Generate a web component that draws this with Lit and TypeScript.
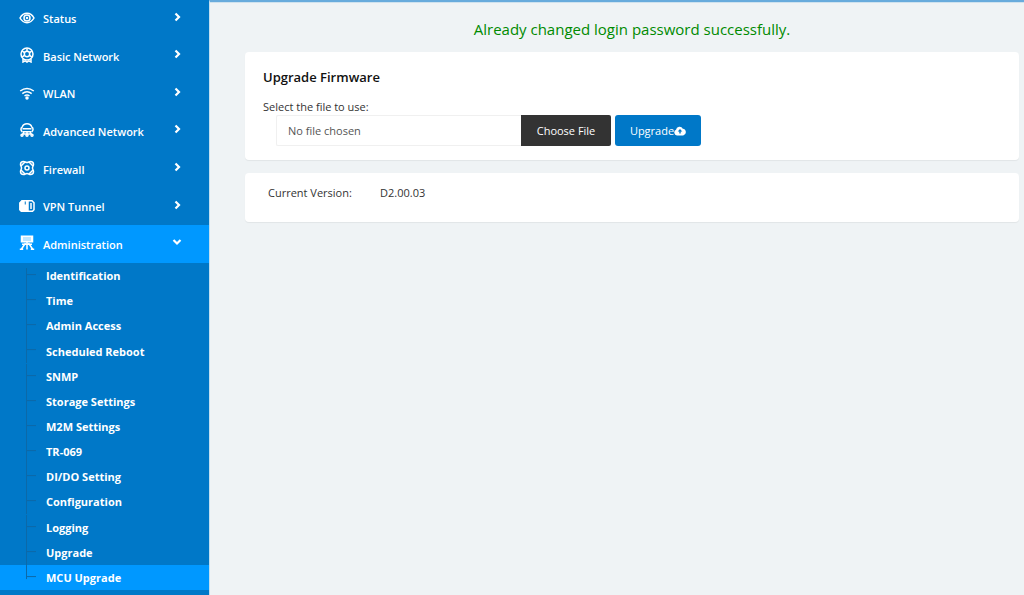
import { LitElement, html, css, svg } from "lit";
import { customElement, state } from "lit/decorators.js";
import { classMap } from "lit/directives/class-map.js";

const icons = {
  status: svg`<path d="M1 8C4.500 1.800 11.500 1.800 15 8C11.500 14.200 4.500 14.200 1 8Z"/><circle cx="8" cy="8" r="3"/><circle cx="8" cy="8" r=".5"/>`,
  basic: svg`<circle cx="8" cy="7" r="6"/><circle cx="8" cy="7" r="2.700"/><path d="M8 1.500v2.500M3.200 4.200l2.200 1.300M12.800 4.200l-2.200 1.300M3.200 9.800l2.200-1.300M12.800 9.800l-2.200-1.300M4 12v3l2.200-1.200L8 15l1.800-1.200L12 15v-3"/>`,
  wlan: svg`<path d="M1.200 6Q8 .8 14.800 6M3.300 8.600Q8 5 12.700 8.600M5.500 11Q8 9 10.500 11"/><circle class="solid" cx="8" cy="13" r="1"/>`,
  advanced: svg`<path d="M3.300 9.800A3 3 0 0 1 3.300 4.800C4.500 .7 11.500 .7 12.700 4.800A3 3 0 0 1 12.700 9.800"/><path d="M3.500 6.800h9M3.500 9.800h9M4.500 9.800v3M8 9.800v3M11.500 9.800v3M3 12h10"/><circle cx="3" cy="13.200" r="1"/><circle cx="8" cy="13.200" r="1"/><circle cx="13" cy="13.200" r="1"/>`,
  firewall: svg`<path d="M4.500 1.500C2.500 1.500 1.500 2.500 1.500 4.500C1.500 6 2.500 6.500 2.500 8C2.500 9.500 1.500 10 1.500 11.500C1.500 13.500 2.500 14.500 4.500 14.500C6 14.500 6.500 13.500 8 13.500C9.500 13.500 10 14.500 11.500 14.500C13.500 14.500 14.500 13.500 14.500 11.500C14.500 10 13.500 9.500 13.500 8C13.500 6.500 14.500 6 14.500 4.500C14.500 2.500 13.500 1.500 11.500 1.500C10 1.500 9.500 2.500 8 2.500C6.500 2.500 6 1.500 4.500 1.500Z"/><circle cx="8" cy="8" r="2"/><path d="M2 6L6 2M10 2l4 4M2 10l4 4M14 10l-4 4"/>`,
  vpn: svg`<path d="M3.500 2.800h9.500l2 2v6.900l-1.500 1.500H2.500L1 11.700V5Z"/><path class="solid" d="M1 5l2-2.200h2v4.400h2.500V2.800H9v10.400H2.500L1 11.700Z"/><path d="M12 5v6"/>`,
  admin: svg`<path class="solid" d="M2.500 1.200h11v5.600h-11z"/><path class="cut" d="M4 3h8M4 5h8"/><path d="M8 7v7.500M3 9.200h10M6.500 8l-4 6M9.500 8l4 6M.8 14.200h3.400M11.800 14.200h3.400"/>`,
};

const sections = [
  { label: "Status", icon: icons.status },
  { label: "Basic Network", icon: icons.basic },
  { label: "WLAN", icon: icons.wlan },
  { label: "Advanced Network", icon: icons.advanced },
  { label: "Firewall", icon: icons.firewall },
  { label: "VPN Tunnel", icon: icons.vpn },
  { label: "Administration", icon: icons.admin },
];

const adminPages = [
  "Identification", "Time", "Admin Access", "Scheduled Reboot", "SNMP",
  "Storage Settings", "M2M Settings", "TR-069", "DI/DO Setting",
  "Configuration", "Logging", "Upgrade", "MCU Upgrade",
];

@customElement("side-menu")
class SideMenu extends LitElement {
  static styles = css`
    :host { display: block; background: #0078c8; color: #fff; }
    a { color: inherit; text-decoration: none; }
    ul { list-style: none; margin: 0; padding: 0; display: grid; grid-auto-rows: 1fr; }
    .sections { height: 263px; }
    .pages { height: 327px; }
    .section {
      display: flex; align-items: center; height: 100%; box-sizing: border-box;
      padding: 0 27px 0 19px; font-size: 11px; font-weight: 600;
    }
    .open, .current { background: #0098ff; }
    .icon {
      width: 16px; height: 16px; margin: 0 8px 2px 0;
      fill: none; stroke: #fff; stroke-width: 1.5;
    }
    .solid { fill: #fff; }
    .cut { stroke: #0098ff; stroke-width: 0.5; }
    .label { flex: 1; }
    .arrow {
      width: 10px; height: 10px; margin-bottom: 4px;
      fill: none; stroke: #fff; stroke-width: 2.2;
    }
    .page {
      display: flex; align-items: center; height: 100%; padding-left: 26px;
      font-size: 11px; font-weight: 700;
    }
    .branch {
      width: 10px; height: 100%; margin-right: 10px;
      fill: none; stroke: #0c69a8; stroke-width: 1;
    }
  `;

  render() {
    return html`
      <nav aria-label="Main">
        <ul class="sections">
          ${sections.map((s) => {
            const open = s.label === "Administration";
            return html`<li>
              <a href="#" class=${classMap({ section: true, open })}>
                <svg class="icon" viewBox="0 0 16 16" aria-hidden="true">${s.icon}</svg>
                <span class="label">${s.label}</span>
                <svg class="arrow" viewBox="0 0 10 10" aria-hidden="true">
                  <path d=${open ? "M1.500 3L5 6.500L8.500 3" : "M3.500 1.500L7 5L3.500 8.500"} />
                </svg>
              </a>
            </li>`;
          })}
        </ul>
        <ul class="pages">
          ${adminPages.map((p, i) => {
            const last = i === adminPages.length - 1;
            const first = i === 0;
            return html`<li>
              <a href="#" class=${classMap({ page: true, current: last })}>
                <svg class="branch" viewBox="0 0 10 25" aria-hidden="true">
                  <path d="M.5 ${first ? 5 : 0}V${last ? 14 : 25}M1 11.500H10" />
                </svg>
                <span>${p}</span>
              </a>
            </li>`;
          })}
        </ul>
      </nav>
    `;
  }
}

@customElement("firmware-form")
class FirmwareForm extends LitElement {
  @state() fileName = "No file chosen";

  static styles = css`
    :host { display: block; }
    h2 { margin: 0; font-size: 13px; line-height: 20px; font-weight: 600; color: #111; }
    .hint { display: block; margin-top: 12px; line-height: 16px; color: #333; }
    .row { display: flex; gap: 4px; margin-left: 13px; }
    .picker { position: relative; display: flex; width: 335px; height: 31px; }
    .name {
      flex: 1; box-sizing: border-box; padding-left: 11px; line-height: 30px;
      border: 1px solid #f0f0f0; border-right: 0; border-radius: 2px 0 0 2px; color: #555;
    }
    .choose {
      width: 90px; line-height: 32px; text-align: center;
      background: #333; color: #fff; border-radius: 0 2px 2px 0;
    }
    .file {
      position: absolute; inset: 0; width: 100%; height: 100%;
      opacity: 0; cursor: pointer;
    }
    .upgrade {
      display: flex; align-items: center; justify-content: center;
      width: 86px; height: 31px; padding: 0; border: 0; border-radius: 3px;
      background: #0078c8; color: #fff; font: inherit; line-height: 32px;
    }
    .cloud { width: 12px; height: 10px; }
  `;

  private pick(e: Event) {
    const f = (e.target as HTMLInputElement).files?.[0];
    this.fileName = f ? f.name : "No file chosen";
  }

  render() {
    return html`
      <h2>Upgrade Firmware</h2>
      <label class="hint" for="file">Select the file to use:</label>
      <div class="row">
        <div class="picker">
          <span class="name">${this.fileName}</span>
          <span class="choose">Choose File</span>
          <input class="file" id="file" type="file" @change=${this.pick} />
        </div>
        <button class="upgrade" type="button">
          Upgrade<svg class="cloud" viewBox="0 0 12 10" aria-hidden="true">
            <path fill="#fff" d="M3 9.500A3 3 0 0 1 2 3.800A3.600 3.600 0 0 1 8.800 2.800A3.400 3.400 0 0 1 9.200 9.500Z" />
            <path fill="#0078c8" d="M6 3L8.300 5.600H6.700V7.600H5.300V5.600H3.700Z" />
          </svg>
        </button>
      </div>
    `;
  }
}

@customElement("app-root")
class AppRoot extends LitElement {
  static styles = css`
    :host {
      display: grid; grid-template-columns: 209px 1fr; min-height: 100vh;
      background: #eff3f5; color: #333;
      font: 11px/17px "Open Sans", "Noto Sans", sans-serif;
    }
    main {
      border-top: 2px solid #68abdc; border-left: 1px solid #c3dff0;
      box-shadow: inset 0 1px 0 #cfe2ee;
      padding: 15px 5px 0 35px;
      display: flex; flex-direction: column;
    }
    .notice {
      margin: 0 0 11px; text-align: center; font-size: 15px; line-height: 24px; color: #008a00;
    }
    .card {
      background: #fff; border-radius: 4px; box-shadow: 0 1px 1px rgba(0, 0, 0, 0.06);
    }
    .upgrade-card { padding: 15px 18px 14px; margin-bottom: 13px; }
    .version-card { display: flex; margin: 0; padding: 11px 23px 21px; }
    dt { width: 112px; }
    dd { margin: 0; }
  `;

  render() {
    return html`
      <side-menu></side-menu>
      <main>
        <p class="notice" role="status">Already changed login password successfully.</p>
        <section class="card upgrade-card"><firmware-form></firmware-form></section>
        <dl class="card version-card">
          <dt>Current Version:</dt>
          <dd>D2.00.03</dd>
        </dl>
      </main>
    `;
  }
}
